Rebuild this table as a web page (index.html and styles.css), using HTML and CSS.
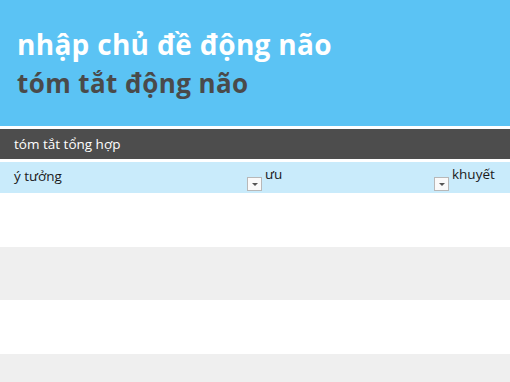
FILE: index.html
```html
<!DOCTYPE html>
<html lang="vi">
<head>
<meta charset="utf-8">
<link rel="stylesheet" href="styles.css">
</head>
<body>
<header class="banner">
  <h1 class="title">nhập chủ đề động não</h1>
  <h2 class="subtitle">tóm tắt động não</h2>
</header>
<div class="bar">tóm tắt tổng hợp</div>
<div class="table">
  <div class="head">
    <div class="cell c1"><span class="label">ý tưởng</span><span class="dd"></span></div>
    <div class="cell c2"><span class="label">ưu</span><span class="dd"></span></div>
    <div class="cell c3"><span class="label">khuyết</span></div>
  </div>
  <div class="row"></div>
  <div class="row alt"></div>
  <div class="row"></div>
  <div class="row alt last"></div>
</div>
</body>
</html>
```
FILE: styles.css
```css
html, body {
  margin: 0;
  padding: 0;
  background: #ffffff;
  overflow: hidden;
}
body {
  width: 510px;
  height: 382px;
  font-family: "Open Sans", "Noto Sans", sans-serif;
}
.banner {
  background: #5bc3f4;
  padding: 26px 0 0 17px;
  box-sizing: content-box;
  height: 100px;
  border-bottom: 3px solid #ffffff;
}
.title, .subtitle {
  margin: 0;
  font-weight: 700;
  line-height: 36px;
}
.title {
  color: #ffffff;
  font-size: 28px;
  letter-spacing: 0.3px;
}
.subtitle {
  color: #4a4a4a;
  font-size: 26px;
  letter-spacing: 0.4px;
  margin-top: 3px;
}
.bar {
  height: 30px;
  background: #4d4d4d;
  color: #ffffff;
  font-size: 13.5px;
  line-height: 30px;
  padding-left: 14px;
  border-bottom: 3px solid #ffffff;
}
.head {
  display: grid;
  grid-template-columns: 263px 188px 1fr;
  height: 31px;
  background: #c9ebfb;
}
.cell {
  display: flex;
  align-items: flex-end;
  justify-content: space-between;
  padding-bottom: 2px;
  font-size: 13.5px;
  color: #1a1a1a;
}
.c1 { padding-left: 14px; padding-right: 1px; }
.c2 { padding-left: 2px; padding-right: 2px; }
.c3 { padding-left: 1px; }
.label { line-height: 17px; margin-bottom: 6px; }
.c2 .label, .c3 .label { margin-bottom: 8px; }
.dd {
  width: 13px;
  height: 12px;
  border: 1px solid #b8b8b8;
  background: #fafafa;
  position: relative;
  flex: none;
}
.dd::after {
  content: "";
  position: absolute;
  left: 4px;
  top: 5px;
  border-left: 3px solid transparent;
  border-right: 3px solid transparent;
  border-top: 3px solid #555555;
}
.row {
  height: 53.5px;
  background: #ffffff;
}
.row.alt { background: #efefef; }
.row.last { height: 29px; }
```
